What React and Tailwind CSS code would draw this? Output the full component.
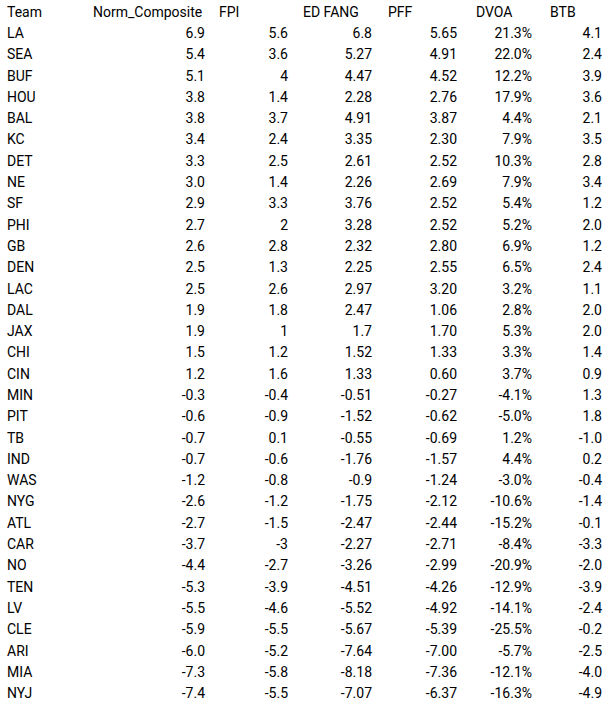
import React from "react";

const headers = ["Team", "Norm_Composite", "FPI", "ED FANG", "PFF", "DVOA", "BTB"];

const rows = [
  ["LA", "6.9", "5.6", "6.8", "5.65", "21.3%", "4.1"],
  ["SEA", "5.4", "3.6", "5.27", "4.91", "22.0%", "2.4"],
  ["BUF", "5.1", "4", "4.47", "4.52", "12.2%", "3.9"],
  ["HOU", "3.8", "1.4", "2.28", "2.76", "17.9%", "3.6"],
  ["BAL", "3.8", "3.7", "4.91", "3.87", "4.4%", "2.1"],
  ["KC", "3.4", "2.4", "3.35", "2.30", "7.9%", "3.5"],
  ["DET", "3.3", "2.5", "2.61", "2.52", "10.3%", "2.8"],
  ["NE", "3.0", "1.4", "2.26", "2.69", "7.9%", "3.4"],
  ["SF", "2.9", "3.3", "3.76", "2.52", "5.4%", "1.2"],
  ["PHI", "2.7", "2", "3.28", "2.52", "5.2%", "2.0"],
  ["GB", "2.6", "2.8", "2.32", "2.80", "6.9%", "1.2"],
  ["DEN", "2.5", "1.3", "2.25", "2.55", "6.5%", "2.4"],
  ["LAC", "2.5", "2.6", "2.97", "3.20", "3.2%", "1.1"],
  ["DAL", "1.9", "1.8", "2.47", "1.06", "2.8%", "2.0"],
  ["JAX", "1.9", "1", "1.7", "1.70", "5.3%", "2.0"],
  ["CHI", "1.5", "1.2", "1.52", "1.33", "3.3%", "1.4"],
  ["CIN", "1.2", "1.6", "1.33", "0.60", "3.7%", "0.9"],
  ["MIN", "-0.3", "-0.4", "-0.51", "-0.27", "-4.1%", "1.3"],
  ["PIT", "-0.6", "-0.9", "-1.52", "-0.62", "-5.0%", "1.8"],
  ["TB", "-0.7", "0.1", "-0.55", "-0.69", "1.2%", "-1.0"],
  ["IND", "-0.7", "-0.6", "-1.76", "-1.57", "4.4%", "0.2"],
  ["WAS", "-1.2", "-0.8", "-0.9", "-1.24", "-3.0%", "-0.4"],
  ["NYG", "-2.6", "-1.2", "-1.75", "-2.12", "-10.6%", "-1.4"],
  ["ATL", "-2.7", "-1.5", "-2.47", "-2.44", "-15.2%", "-0.1"],
  ["CAR", "-3.7", "-3", "-2.27", "-2.71", "-8.4%", "-3.3"],
  ["NO", "-4.4", "-2.7", "-3.26", "-2.99", "-20.9%", "-2.0"],
  ["TEN", "-5.3", "-3.9", "-4.51", "-4.26", "-12.9%", "-3.9"],
  ["LV", "-5.5", "-4.6", "-5.52", "-4.92", "-14.1%", "-2.4"],
  ["CLE", "-5.9", "-5.5", "-5.67", "-5.39", "-25.5%", "-0.2"],
  ["ARI", "-6.0", "-5.2", "-7.64", "-7.00", "-5.7%", "-2.5"],
  ["MIA", "-7.3", "-5.8", "-8.18", "-7.36", "-12.1%", "-4.0"],
  ["NYJ", "-7.4", "-5.5", "-7.07", "-6.37", "-16.3%", "-4.9"],
];

// header text offset from the column's left edge
const headPad = ["pl-[7px]", "pl-[3px]", "pl-[5px]", "pl-[5px]", "pl-[6px]", "pl-[6px]", "pl-[6px]"];
// number offset from the column's right edge
const numPad = ["pl-[7px]", "pr-[9px]", "pr-[10px]", "pr-[10px]", "pr-[13px]", "pr-[12px]", "pr-[6px]"];

const grid = "grid grid-cols-[90px_124px_84px_84px_88px_74px_64px] h-[21.3px] items-center";

const App = () => {
  return (
    <div
      className="w-[608px] h-[709px] bg-white text-black pt-[1px] text-[14px] leading-none overflow-hidden"
      style={{ fontFamily: "Roboto, 'Liberation Sans', sans-serif" }}
    >
      {/* header row */}
      <div className={grid}>
        {headers.map((h, i) => (
          <div key={h} className={`${headPad[i]} whitespace-nowrap`}>
            {h}
          </div>
        ))}
      </div>

      {/* data rows */}
      {rows.map((r) => (
        <div key={r[0]} className={grid}>
          {r.map((v, i) => (
            <div
              key={i}
              className={`${numPad[i]} whitespace-nowrap ${i === 0 ? "text-left" : "text-right"}`}
            >
              {v}
            </div>
          ))}
        </div>
      ))}
    </div>
  );
};

export default App;
